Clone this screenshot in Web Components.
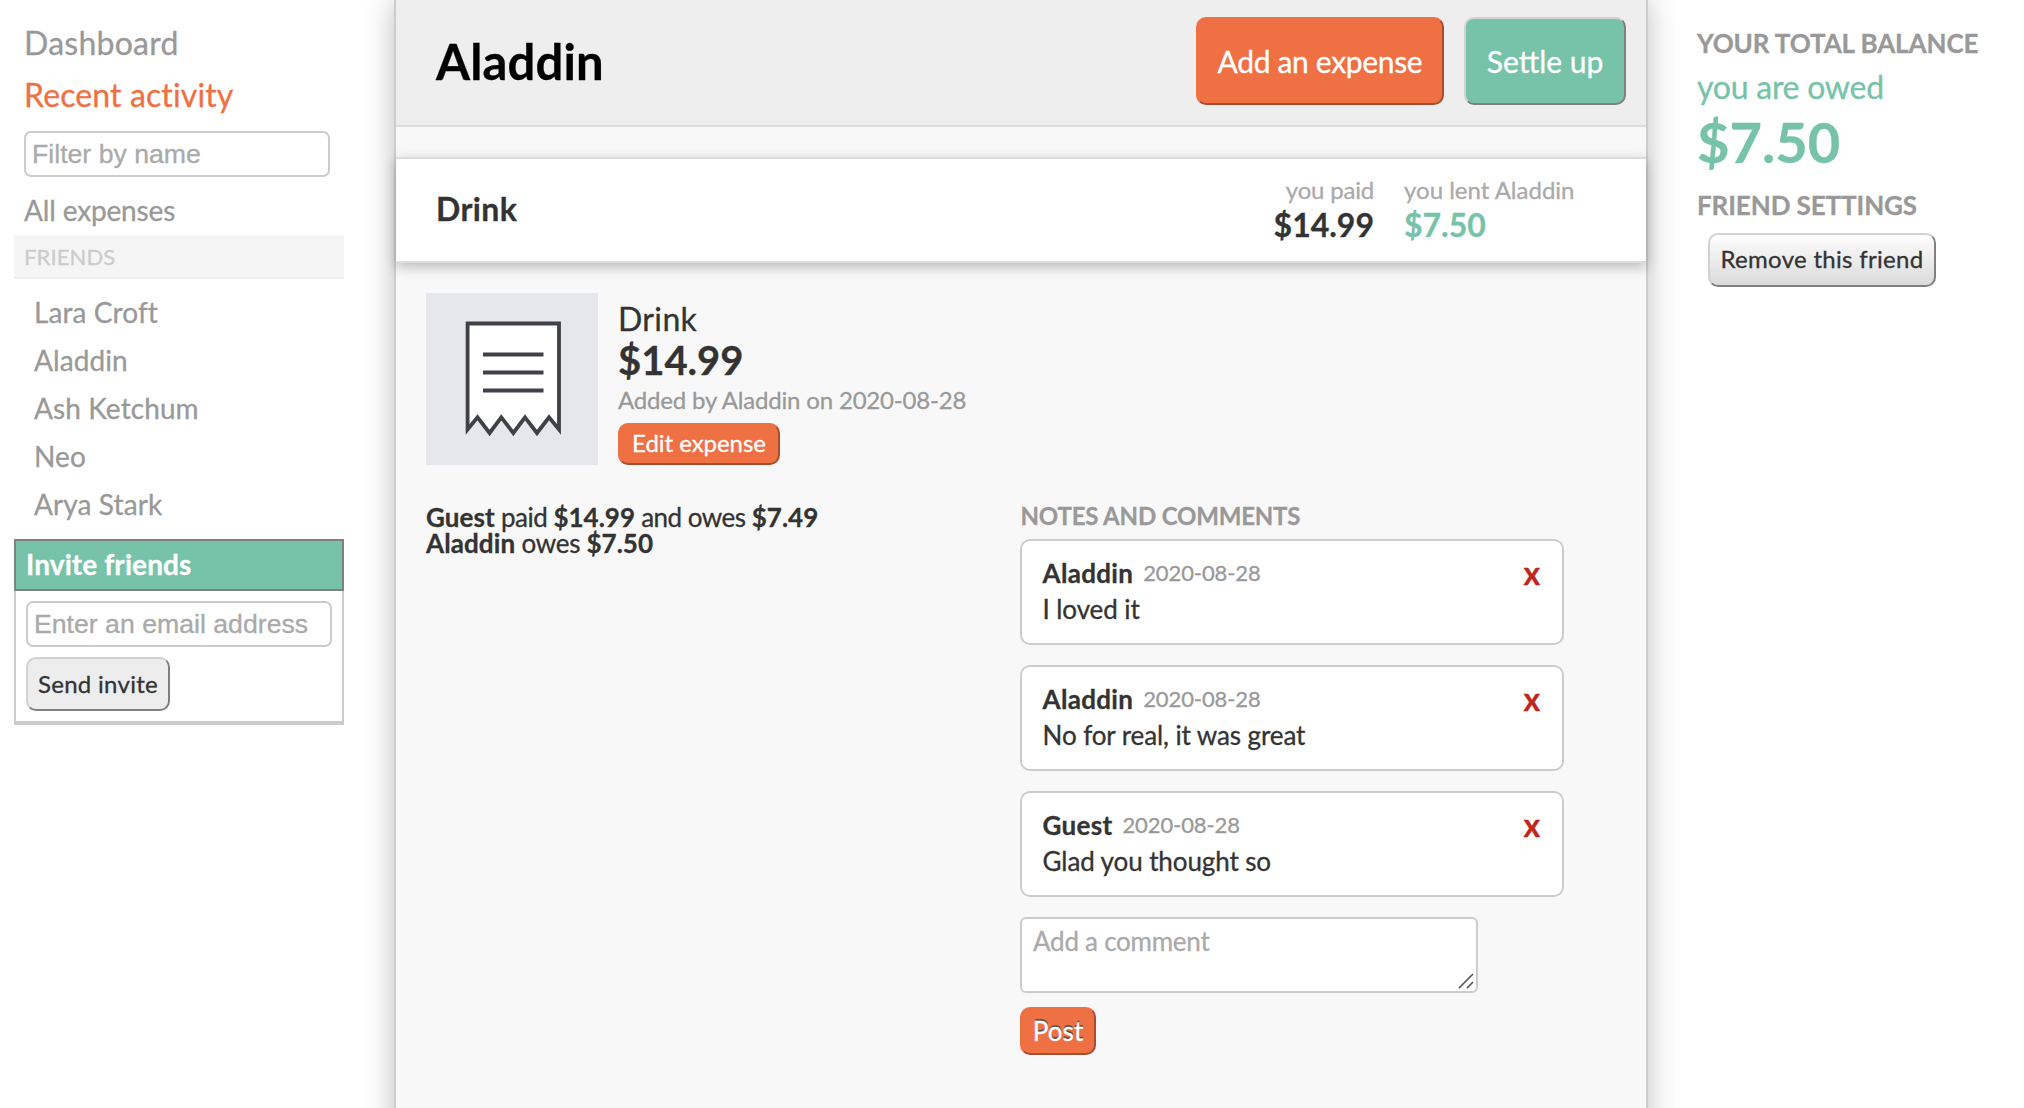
<!DOCTYPE html>
<html lang="en">
<head>
<meta charset="utf-8">
<title>Aladdin</title>
<style>
html,body{margin:0;height:100%;overflow:hidden;background:#fff}
body{font-family:Lato,"Liberation Sans",sans-serif;color:#333;font-variant-ligatures:none;-webkit-text-stroke:.3px currentColor}
</style>
</head>
<body>
<expense-app></expense-app>
<script>
const define = (name, css, html) => {
  const tpl = document.createElement('template');
  tpl.innerHTML = `<style>:host{display:block;box-sizing:border-box}*{box-sizing:border-box}${css}</style>${html}`;
  customElements.define(name, class extends HTMLElement {
    constructor() {
      super();
      this.attachShadow({mode: 'open'}).append(tpl.content.cloneNode(true));
    }
    connectedCallback() {
      const field = this.shadowRoot.querySelector('input,textarea');
      if (field && this.hasAttribute('placeholder')) field.placeholder = this.getAttribute('placeholder');
    }
  });
};

define('ui-button', `
:host{width:var(--w);height:var(--h,54px);flex:none}
button{display:block;width:100%;height:100%;margin:0;padding:var(--pt,0) 0 var(--pb,0);border:2px solid;border-color:#d2d2d2 #808080 #808080 #d2d2d2;border-radius:10px;
background:#ededed;color:#333;font:400 24px/1.2 Lato,sans-serif;letter-spacing:var(--ls,.3px);white-space:nowrap}
:host([kind=orange]) button{background:#ef7043;border-color:#ef7043 #a84d2d #a84d2d #ef7043;color:#fff}
:host([kind=teal]) button{background:#76c3a9;color:#fff}
:host([kind=gradient]) button{background:linear-gradient(#fff,#d9d9d9) border-box}
:host([size=large]) button{font-size:30px}
:host([shadowed]) button{font-size:26px;text-shadow:0 -2px 0 #555}
`, `<button><slot></slot></button>`);

define('text-field', `
:host{width:306px;height:46px}
input{display:block;width:100%;height:100%;margin:0;padding:0 6px;border:2px solid #ccc;border-radius:7px;background:#fff;font:26.67px "Liberation Sans",sans-serif;outline:0}
input::placeholder{color:#aaa;opacity:1}
`, `<input type="text">`);

define('side-nav', `
:host{width:330px;padding-top:17px}
a{display:block;color:#999}
.top{font-size:32px;line-height:52px;padding-left:10px;letter-spacing:.25px}
.on{color:#ef7043;letter-spacing:.12px}
text-field{margin:10px 0 11px 10px}
.all{font-size:28px;line-height:44px;height:47px;padding-left:10px;letter-spacing:-.15px}
h3{margin:0;height:44px;border-bottom:2px solid #eee;background:#f5f5f5;color:#ccc;font-weight:400;font-size:22px;line-height:43px;padding-left:10px;letter-spacing:.1px}
`, `<a class="top">Dashboard</a><a class="top on">Recent activity</a>
<text-field placeholder="Filter by name"></text-field>
<a class="all">All expenses</a><h3>FRIENDS</h3><slot></slot>`);

define('friend-list', `
:host{padding:9px 0 11px 20px}
::slotted(span){display:block;color:#999;font-size:28px;line-height:48px;letter-spacing:.1px}
`, `<slot></slot>`);

define('invite-box', `
h3{margin:0;height:52px;border:2px solid #808080;background:#76c3a9;color:#fff;font-weight:700;font-size:28px;line-height:46px;padding-left:10px;letter-spacing:.1px}
div{height:134px;border:2px solid #ccc;border-top:0;border-bottom-width:4px;padding:10px;display:flex;flex-direction:column;gap:10px}
`, `<h3>Invite friends</h3><div><text-field placeholder="Enter an email address"></text-field><ui-button style="--w:144px">Send invite</ui-button></div>`);

define('page-header', `
:host{display:flex;align-items:center;height:127px;border-bottom:2px solid #ddd;background:#eee;padding:0 20px 3px 40px}
h1{margin:0;flex:1;color:#000;font-size:49px;line-height:60px;letter-spacing:.15px}
.b{display:flex;gap:20px}
`, `<h1><slot></slot></h1><div class="b"><ui-button kind="orange" size="large" style="--w:248px;--h:88px;--ls:-.33px;--pb:1px">Add an expense</ui-button><ui-button kind="teal" size="large" style="--w:162px;--h:88px;--ls:0;--pb:1px">Settle up</ui-button></div>`);

define('expense-row', `
:host{display:flex;margin-top:30px;height:106px;border:2px solid #ddd;border-width:2px 0;background:#fff;box-shadow:0 4px 12px rgba(0,0,0,.25);padding:15px 72px 0 40px}
b{flex:1;font-size:32px;line-height:69px;letter-spacing:.4px}
.c{display:flex;flex-direction:column;font-size:24px;line-height:31px;color:#aaa}
.r{text-align:right;margin-right:30px}
.r span{letter-spacing:-.2px}
.g{width:170px;white-space:nowrap}
.c strong{font-size:32px;line-height:39px;color:#333}
.c.g strong{color:#76c3a9}
`, `<b>Drink</b><div class="c r"><span>you paid</span><strong>$14.99</strong></div><div class="c g"><span>you lent Aladdin</span><strong>$7.50</strong></div>`);

define('receipt-icon', `
:host{width:172px;height:172px;flex:none;background:#e6e7ec}
svg{display:block}
`, `<svg width="172" height="172" viewBox="0 0 172 172" fill="none" stroke="#3f4146" stroke-width="3.8"><path d="M41.6 136.5V30.5H133V136.5L123 124.3 111 140 99 124.3 87.3 140 75.3 124.3 63.6 140 51.5 124.3Z" fill="#fff"/><path d="M57 61.5H117.5M57 79.5H117.5M57 97.5H117.5"/></svg>`);

define('expense-summary', `
:host{display:flex;gap:20px;padding:30px 30px 0}
.t{padding-top:7px}
.n{font-size:32px;line-height:38px;letter-spacing:.35px}
.a{font-size:40px;font-weight:700;line-height:44px}
.d{font-size:24px;line-height:32px;color:#999;margin:2px 0 7px;letter-spacing:-.18px}
`, `<receipt-icon></receipt-icon><div class="t"><div class="n">Drink</div><div class="a">$14.99</div><div class="d">Added by Aladdin on 2020-08-28</div><ui-button kind="orange" style="--w:162px;--h:42px;--ls:-.05px;--pb:1px">Edit expense</ui-button></div>`);

define('comment-card', `
:host{display:flex;height:106px;border:2px solid #ccc;border-radius:10px;background:#fff;padding:15px 22px 0 20.6px;margin-bottom:20px;font-size:26px;line-height:36px;letter-spacing:-.1px}
.m{flex:1}
.h{display:flex;gap:10px;height:35px}
b{letter-spacing:.3px;line-height:34px}
::slotted(time){display:block;font-size:22px;color:#999;line-height:34px}
.x{font-size:32px;font-weight:700;color:#c0261b;line-height:34px}
`, `<div class="m"><div class="h"><b><slot name="who"></slot></b><slot name="date"></slot></div><slot></slot></div><span class="x">x</span>`);

define('comment-form', `
.f{display:grid;width:458px;height:76px;margin-bottom:14px}
textarea,svg{grid-area:1/1}
textarea{display:block;width:458px;height:76px;margin:0;border:2px solid #ccc;border-radius:6px;background:#fff;padding:6px 11px;resize:none;outline:0;overflow:hidden;font:26px/32px Lato,sans-serif;letter-spacing:-.25px}
textarea::placeholder{color:#aaa;opacity:1}
svg{place-self:end;z-index:1;margin:0 4px 4px 0}
`, `<div class="f"><textarea></textarea><svg width="16" height="16" fill="none" stroke="#555" stroke-width="1.6"><path d="M1 15 15 1M9 15l6-6"/></svg></div><ui-button kind="orange" shadowed style="--w:76px;--h:48px;--ls:.1px;--pt:2px">Post</ui-button>`);

define('expense-split', `
:host{display:flex;padding:34px 0 0 30px}
.l{width:594px;padding-top:5px;font-size:26px;line-height:26px;letter-spacing:-.3px}
.l div:first-child{letter-spacing:-.5px}
.l b{letter-spacing:.1px}
.l .v{letter-spacing:0}
.r{width:544px}
h4{margin:0 0 6px;font-size:24px;line-height:34px;color:#999;letter-spacing:-.18px;padding-left:.5px}
`, `<div class="l"><div><b>Guest</b> paid <b class="v">$14.99</b> and owes <b class="v">$7.49</b></div><div><b>Aladdin</b> owes <b class="v">$7.50</b></div></div>
<div class="r"><h4>NOTES AND COMMENTS</h4><slot></slot></div>`);

define('balance-panel', `
:host{padding:25px 0 0 49px;flex:1}
h4{margin:0;font-size:26px;line-height:36px;color:#999;white-space:nowrap;letter-spacing:-.1px}
.o{font-size:32px;line-height:44px;color:#76c3a9;margin:4px 0 3px;letter-spacing:-.25px}
.a{font-size:56px;font-weight:700;line-height:60px;color:#76c3a9;margin-bottom:15px}
ui-button{margin:10px 0 0 11px}
`, `<h4>YOUR TOTAL BALANCE</h4><div class="o">you are owed</div><div class="a">$7.50</div><h4>FRIEND SETTINGS</h4><ui-button kind="gradient" style="--w:228px;--pb:1px">Remove this friend</ui-button>`);

define('expense-app', `
:host{display:flex;height:100vh;overflow:hidden}
aside{width:394px;padding-left:14px;flex:none}
main{width:1254px;flex:none;height:1200px;border:2px solid #ccc;border-width:0 2px;background:#f8f8f8;box-shadow:0 0 28px rgba(0,0,0,.26)}
`, `<aside><side-nav><friend-list><span>Lara Croft</span><span>Aladdin</span><span>Ash Ketchum</span><span>Neo</span><span>Arya Stark</span></friend-list><invite-box></invite-box></side-nav></aside>
<main><page-header>Aladdin</page-header><expense-row></expense-row><expense-summary></expense-summary>
<expense-split>
<comment-card><span slot="who">Aladdin</span><time slot="date">2020-08-28</time>I loved it</comment-card>
<comment-card><span slot="who">Aladdin</span><time slot="date">2020-08-28</time>No for real, it was great</comment-card>
<comment-card><span slot="who">Guest</span><time slot="date">2020-08-28</time>Glad you thought so</comment-card>
<comment-form placeholder="Add a comment"></comment-form>
</expense-split></main><balance-panel></balance-panel>`);
</script>
</body>
</html>
